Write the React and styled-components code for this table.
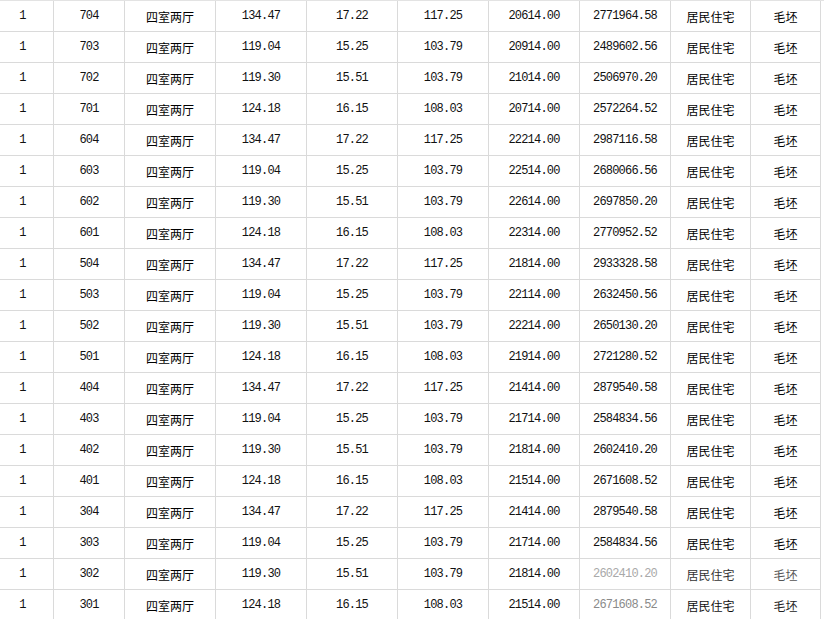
import styled, { createGlobalStyle } from 'styled-components'

const GlobalStyle = createGlobalStyle`
  html, body {
    margin: 0;
    padding: 0;
    background: #ffffff;
  }
  body {
    font-family: "Noto Sans CJK SC", sans-serif;
    overflow: hidden;
  }
`

const columns = [54, 71, 91, 91, 91, 91, 91, 91, 80, 70]

const layouts = {
  '04': ['134.47', '17.22', '117.25'],
  '03': ['119.04', '15.25', '103.79'],
  '02': ['119.30', '15.51', '103.79'],
  '01': ['124.18', '16.15', '108.03'],
}

const sales = [
  ['704', '20614.00', '2771964.58'],
  ['703', '20914.00', '2489602.56'],
  ['702', '21014.00', '2506970.20'],
  ['701', '20714.00', '2572264.52'],
  ['604', '22214.00', '2987116.58'],
  ['603', '22514.00', '2680066.56'],
  ['602', '22614.00', '2697850.20'],
  ['601', '22314.00', '2770952.52'],
  ['504', '21814.00', '2933328.58'],
  ['503', '22114.00', '2632450.56'],
  ['502', '22214.00', '2650130.20'],
  ['501', '21914.00', '2721280.52'],
  ['404', '21414.00', '2879540.58'],
  ['403', '21714.00', '2584834.56'],
  ['402', '21814.00', '2602410.20'],
  ['401', '21514.00', '2671608.52'],
  ['304', '21414.00', '2879540.58'],
  ['303', '21714.00', '2584834.56'],
  ['302', '21814.00', '2602410.20'],
  ['301', '21514.00', '2671608.52'],
]

const faded = {
  '302': { 7: '#a9a9a9', 8: '#333', 9: '#555' },
  '301': { 7: '#8a8a8a', 8: '#111', 9: '#222' },
}

const App = () => {
  return (
    <>
      <GlobalStyle />
      <Sheet>
        {sales.map(([room, price, total]) => {
          const [area, shared, inner] = layouts[room.slice(1)]
          const cells = [
            ['1', true],
            [room, true],
            ['四室两厅', false],
            [area, true],
            [shared, true],
            [inner, true],
            [price, true],
            [total, true],
            ['居民住宅', false],
            ['毛坯', false],
          ]
          const tint = faded[room] || {}
          return (
            <Row key={room}>
              {cells.map(([text, num], i) => (
                <Cell key={i} $num={num} $color={tint[i]} $first={i === 0}>
                  {text}
                </Cell>
              ))}
            </Row>
          )
        })}
      </Sheet>
    </>
  )
}

const Sheet = styled.div`
  width: 824px;
  border-top: 1px solid #e3e3e3;
`

const Row = styled.div`
  display: grid;
  grid-template-columns: ${columns.map((w) => `${w}px`).join(' ')};
  height: 31px;
`

const Cell = styled.div`
  box-sizing: border-box;
  display: flex;
  align-items: center;
  justify-content: center;
  border-right: 1px solid #dadada;
  border-bottom: 1px solid #dadada;
  color: ${(p) => p.$color || (p.$num ? '#111' : '#000')};
  font-family: ${(p) =>
    p.$num ? '"Liberation Mono", monospace' : '"Noto Sans CJK SC", sans-serif'};
  font-size: 12px;
  letter-spacing: ${(p) => (p.$num ? '-0.8px' : '0')};
  white-space: nowrap;
  padding-right: ${(p) => (p.$first ? '8px' : '0')};
`

export default App
